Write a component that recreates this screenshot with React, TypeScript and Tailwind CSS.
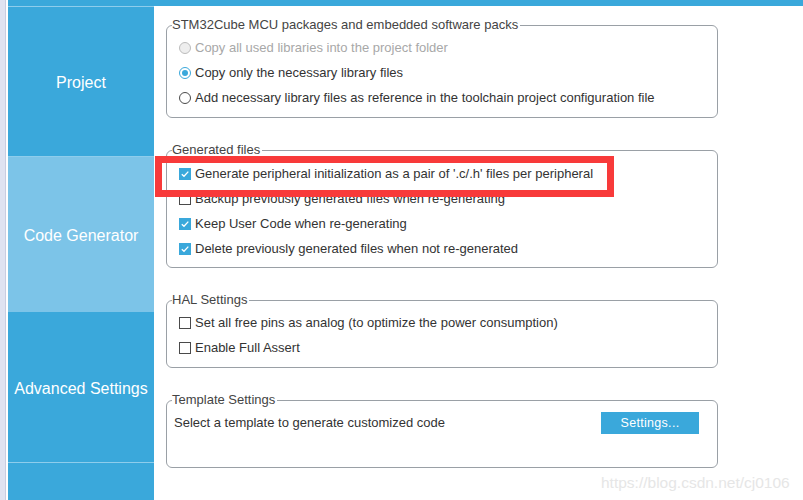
import React from 'react';

function Radio({ state }: { state: 'off' | 'on' | 'disabled' }) {
  if (state === 'disabled')
    return <span className="w-[12px] h-[12px] rounded-full border border-[#bcbcbc] bg-[#eeeeee] shrink-0" />;
  if (state === 'on')
    return (
      <span className="w-[12px] h-[12px] rounded-full border border-[#3aa8db] bg-white shrink-0 flex items-center justify-center">
        <span className="w-[6px] h-[6px] rounded-full bg-[#3aa8db]" />
      </span>
    );
  return <span className="w-[12px] h-[12px] rounded-full border border-[#4a4a4a] bg-white shrink-0" />;
}

function Check({ on }: { on: boolean }) {
  if (!on) return <span className="w-[12px] h-[12px] border border-[#4a4a4a] bg-white shrink-0" />;
  return (
    <span className="w-[12px] h-[12px] bg-[#3aa8db] shrink-0 flex items-center justify-center">
      <svg width="10" height="10" viewBox="0 0 10 10">
        <path d="M1.8 5.2 L4 7.3 L8.3 2.6" fill="none" stroke="white" strokeWidth="1.3" />
      </svg>
    </span>
  );
}

function Row({ children, label, muted }: { children: React.ReactNode; label: string; muted?: boolean }) {
  return (
    <div className={`h-[25px] flex items-center gap-[4px] ${muted ? 'text-[#a8a8a8]' : 'text-[#333]'}`}>
      {children}
      <span>{label}</span>
    </div>
  );
}

function Group({ title, children, className, inner }: { title: string; children: React.ReactNode; className?: string; inner?: string }) {
  return (
    <fieldset className={`border border-[#9aa0a6] rounded-[6px] w-[552px] ${className || ''}`}>
      <legend className="ml-[5px] pr-[2px] h-[16px] leading-[16px] text-[#444]">{title}</legend>
      <div className={inner}>{children}</div>
    </fieldset>
  );
}

export default function App() {
  return (
    <div className="relative w-[803px] h-[500px] overflow-hidden flex bg-white text-[13px]"
      style={{ fontFamily: '"Liberation Sans", Arial, sans-serif' }}>
      {/* left edge */}
      <div className="w-[5px] bg-[#dfe3f1]" />
      <div className="w-[1px] bg-[#c9cde0]" />
      <div className="w-[2px] bg-white" />

      <div className="flex-1 flex flex-col">
        <div className="h-[6px] bg-[#3aa8db]" />
        <div className="flex-1 flex">
          {/* sidebar */}
          <div className="w-[146px] flex flex-col text-white text-[16px]">
            <div className="h-[1px] bg-[#8ecdec]" />
            <div className="h-[149px] bg-[#3aa8db] flex items-center justify-center pt-[3px]">Project</div>
            <div className="h-[1px] bg-[#8ecdec]" />
            <div className="h-[155px] bg-[#7cc4e8] flex items-center justify-center pt-[2px]">Code Generator</div>
            <div className="h-[150px] bg-[#3aa8db] flex items-center justify-center pt-[3px]">Advanced Settings</div>
            <div className="h-[1px] bg-[#8ecdec]" />
            <div className="flex-1 bg-[#3aa8db]" />
          </div>

          {/* content */}
          <div className="flex-1 pl-[12px] pt-[11px] flex flex-col">
            <Group title="STM32Cube MCU packages and embedded software packs" inner="pl-[12px] pt-[2px] pb-[7px]">
              <Row label="Copy all used libraries into the project folder" muted><Radio state="disabled" /></Row>
              <Row label="Copy only the necessary library files"><Radio state="on" /></Row>
              <Row label="Add necessary library files as reference in the toolchain project configuration file"><Radio state="off" /></Row>
            </Group>

            <Group title="Generated files" className="mt-[24px]" inner="pl-[12px] pt-[3px] pb-[6px]">
              <Row label="Generate peripheral initialization as a pair of '.c/.h' files per peripheral"><Check on /></Row>
              <Row label="Backup previously generated files when re-generating"><Check on={false} /></Row>
              <Row label="Keep User Code when re-generating"><Check on /></Row>
              <Row label="Delete previously generated files when not re-generated"><Check on /></Row>
            </Group>

            <Group title="HAL Settings" className="mt-[24px]" inner="pl-[12px] pt-[2px] pb-[7px]">
              <Row label="Set all free pins as analog (to optimize the power consumption)"><Check on={false} /></Row>
              <Row label="Enable Full Assert"><Check on={false} /></Row>
            </Group>

            <Group title="Template Settings" className="mt-[24px]" inner="pl-[7px] pr-[18px] pt-[4px] pb-[33px]">
              <div className="h-[22px] flex items-center justify-between text-[#333]">
                <span>Select a template to generate customized code</span>
                <button className="w-[98px] h-[22px] bg-[#3aa8db] text-white text-[12.5px] tracking-[0.3px]">Settings...</button>
              </div>
            </Group>
          </div>
        </div>
      </div>

      {/* highlight */}
      <div className="absolute left-[155px] top-[156px] w-[459px] h-[41px] border-[7px] border-[#f83a3a]" />

      {/* watermark */}
      <div className="absolute left-[601px] top-[471px] text-[15.5px] text-[#e6e6e6]">https://blog.csdn.net/cj0106</div>
    </div>
  );
}
